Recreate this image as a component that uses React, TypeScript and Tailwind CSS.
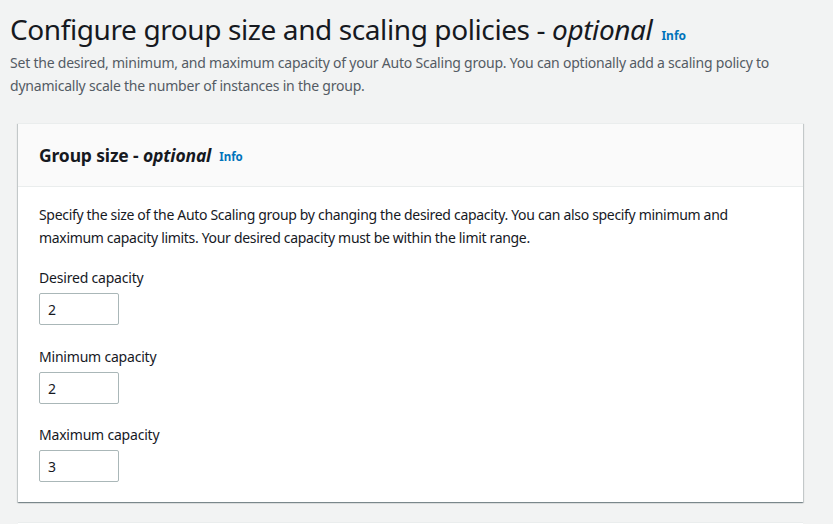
const font = { fontFamily: '"Noto Sans", "Open Sans", Arial, sans-serif' };

function Field({ label, value, className }: { label: string; value: string; className?: string }) {
  return (
    <div className={"flex flex-col " + (className ?? "")}>
      <label className="text-[14px] leading-[22px] tracking-[-0.2px] text-[#16191f]">{label}</label>
      <input
        readOnly
        value={value}
        className="mt-[4px] h-[32px] w-[80px] rounded-[2px] border border-[#aab7b8] bg-white px-[8px] text-[14px] text-[#16191f] outline-none"
      />
    </div>
  );
}

export default function App() {
  return (
    <div style={font} className="h-[524px] w-[833px] overflow-hidden bg-[#f2f3f3]">
      <div className="px-[10px] pt-[11px]">
        <h1 className="h-[36px] text-[28px] leading-[36px] font-normal tracking-[-0.4px] text-[#16191f]">
          Configure group size and scaling policies - <i>optional</i>
          <a className="ml-[9px] text-[12px] font-bold tracking-normal text-[#0073bb]">Info</a>
        </h1>
        <p className="mt-[4px] text-[14px] leading-[23px] tracking-[-0.22px] text-[#545b64]">
          Set the desired, minimum, and maximum capacity of your Auto Scaling group. You can optionally add a scaling policy to dynamically scale the number of instances in the group.
        </p>
      </div>

      <div className="mt-[26px] ml-[18px] w-[785px] border-t border-[#eaeded] bg-white shadow-[0_1px_1px_0_rgba(0,28,36,0.3),1px_1px_1px_0_rgba(0,28,36,0.15),-1px_1px_1px_0_rgba(0,28,36,0.15)]">
        <div className="flex h-[63px] items-center border-b border-[#eaeded] bg-[#fafafa] px-[21px]">
          <h2 className="text-[17.5px] font-bold tracking-[-0.15px] text-[#16191f]">
            Group size - <i className="font-bold">optional</i>
          </h2>
          <a className="ml-[8px] mt-[3px] text-[11.5px] font-bold text-[#0073bb]">Info</a>
        </div>
        <div className="flex flex-col px-[21px] pt-[16px] pb-[20px]">
          <p className="text-[14px] leading-[23px] tracking-[-0.32px] text-[#16191f]">
            Specify the size of the Auto Scaling group by changing the desired capacity. You can also specify minimum and maximum capacity limits. Your desired capacity must be within the limit range.
          </p>
          <Field className="mt-[18px]" label="Desired capacity" value="2" />
          <Field className="mt-[21px]" label="Minimum capacity" value="2" />
          <Field className="mt-[20px]" label="Maximum capacity" value="3" />
        </div>
      </div>

      <div className="mt-[20px] ml-[18px] h-[40px] w-[785px] border-t border-[#eaeded] bg-white" />
    </div>
  );
}
